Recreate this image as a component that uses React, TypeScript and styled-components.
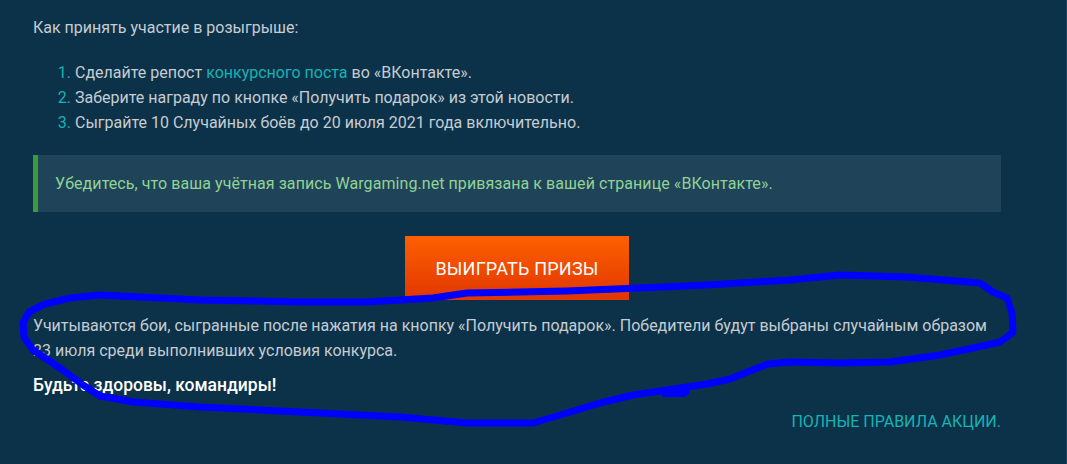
import React from "react";
import styled, { createGlobalStyle } from "styled-components";

const Global = createGlobalStyle`
  html, body { margin: 0; padding: 0; background: #0c3249; }
  body { font-family: Roboto, "Noto Sans", Arial, sans-serif; }
`;

const Page = styled.div`
  position: relative;
  width: 1067px;
  height: 464px;
  box-sizing: border-box;
  background: #0c3249;
  border-right: 1px solid #1b4560;
  overflow: hidden;
`;

const Content = styled.div`
  width: 968px;
  padding: 15px 0 0 33px;
  display: flex;
  flex-direction: column;
  color: #c6ccd1;
  font-size: 16px;
  line-height: 25px;
`;

const Text = styled.p<{ $mt?: number }>`
  margin: ${(p) => p.$mt ?? 0}px 0 0;
`;

const Steps = styled.ol`
  margin: 20px 0 0;
  padding-left: 42px;
  li::marker { color: #17b2b4; }
`;

const Link = styled.a`
  color: #17b2b4;
  text-decoration: none;
`;

const Callout = styled.div`
  margin-top: 20px;
  background: #1f4459;
  border-left: 5px solid #3a9b3a;
  padding: 16px 17px;
  color: #92d295;
  letter-spacing: 0.07px;
`;

const ButtonRow = styled.div`
  display: flex;
  justify-content: center;
  margin-top: 24px;
`;

const Button = styled.button`
  width: 224px;
  height: 64px;
  border: 0;
  background: linear-gradient(180deg, #fd6000 0%, #e13600 100%);
  color: #ffffff;
  font-family: Roboto, Arial, sans-serif;
  font-size: 18px;
  letter-spacing: 0.2px;
  text-transform: uppercase;
  cursor: pointer;
`;

const Farewell = styled.p`
  margin: 10px 0 0;
  color: #ffffff;
  font-size: 17.5px;
  font-weight: 500;
`;

const RulesRow = styled.div`
  display: flex;
  justify-content: flex-end;
  margin-top: 11px;
`;

const Rules = styled.a`
  color: #17b2b4;
  text-transform: uppercase;
  text-decoration: none;
  font-size: 16px;
`;

const Scribble = styled.svg`
  position: absolute;
  left: 0;
  top: 0;
  pointer-events: none;
`;

const pts: [number, number][] = [
  [686, 392], [667, 390], [633, 395], [600, 403], [567, 413], [533, 423], [467, 423],
  [400, 417], [300, 412], [200, 407], [133, 402], [100, 396], [83, 385], [60, 368],
  [33, 350], [24, 337], [23, 323], [29, 312], [45, 304], [70, 298], [100, 295], [140, 297],
  [200, 300], [300, 302], [367, 302], [433, 298], [467, 293], [567, 291], [640, 288],
  [707, 285], [790, 280], [840, 275], [907, 277], [980, 283], [993, 292], [1007, 298],
  [1012, 313], [1013, 332], [1007, 337], [1000, 342], [973, 348], [940, 355], [890, 362],
  [840, 363], [790, 362], [768, 364], [750, 371], [730, 379], [707, 384], [667, 390],
];

export default function App() {
  const d = pts.map((p, i) => `${i ? "L" : "M"}${p[0]} ${p[1]}`).join(" ");
  return (
    <>
      <Global />
      <Page>
        <Content>
          <Text>Как принять участие в розыгрыше:</Text>
          <Steps>
            <li>
              Сделайте репост <Link href="#">конкурсного поста</Link> во «ВКонтакте».
            </li>
            <li>Заберите награду по кнопке «Получить подарок» из этой новости.</li>
            <li>Сыграйте 10 Случайных боёв до 20 июля 2021 года включительно.</li>
          </Steps>
          <Callout>
            Убедитесь, что ваша учётная запись Wargaming.net привязана к вашей странице «ВКонтакте».
          </Callout>
          <ButtonRow>
            <Button>Выиграть призы</Button>
          </ButtonRow>
          <Text $mt={13}>
            Учитываются бои, сыгранные после нажатия на кнопку «Получить подарок». Победители будут
            выбраны случайным образом 23 июля среди выполнивших условия конкурса.
          </Text>
          <Farewell>Будьте здоровы, командиры!</Farewell>
          <RulesRow>
            <Rules href="#">Полные правила акции.</Rules>
          </RulesRow>
        </Content>
        <Scribble width="1067" height="464" viewBox="0 0 1067 464">
          <path
            d={d}
            fill="none"
            stroke="#0000ff"
            strokeWidth="7"
            strokeLinejoin="round"
            strokeLinecap="round"
          />
          <rect x="662" y="389" width="24" height="8" fill="#0000ff" />
        </Scribble>
      </Page>
    </>
  );
}
